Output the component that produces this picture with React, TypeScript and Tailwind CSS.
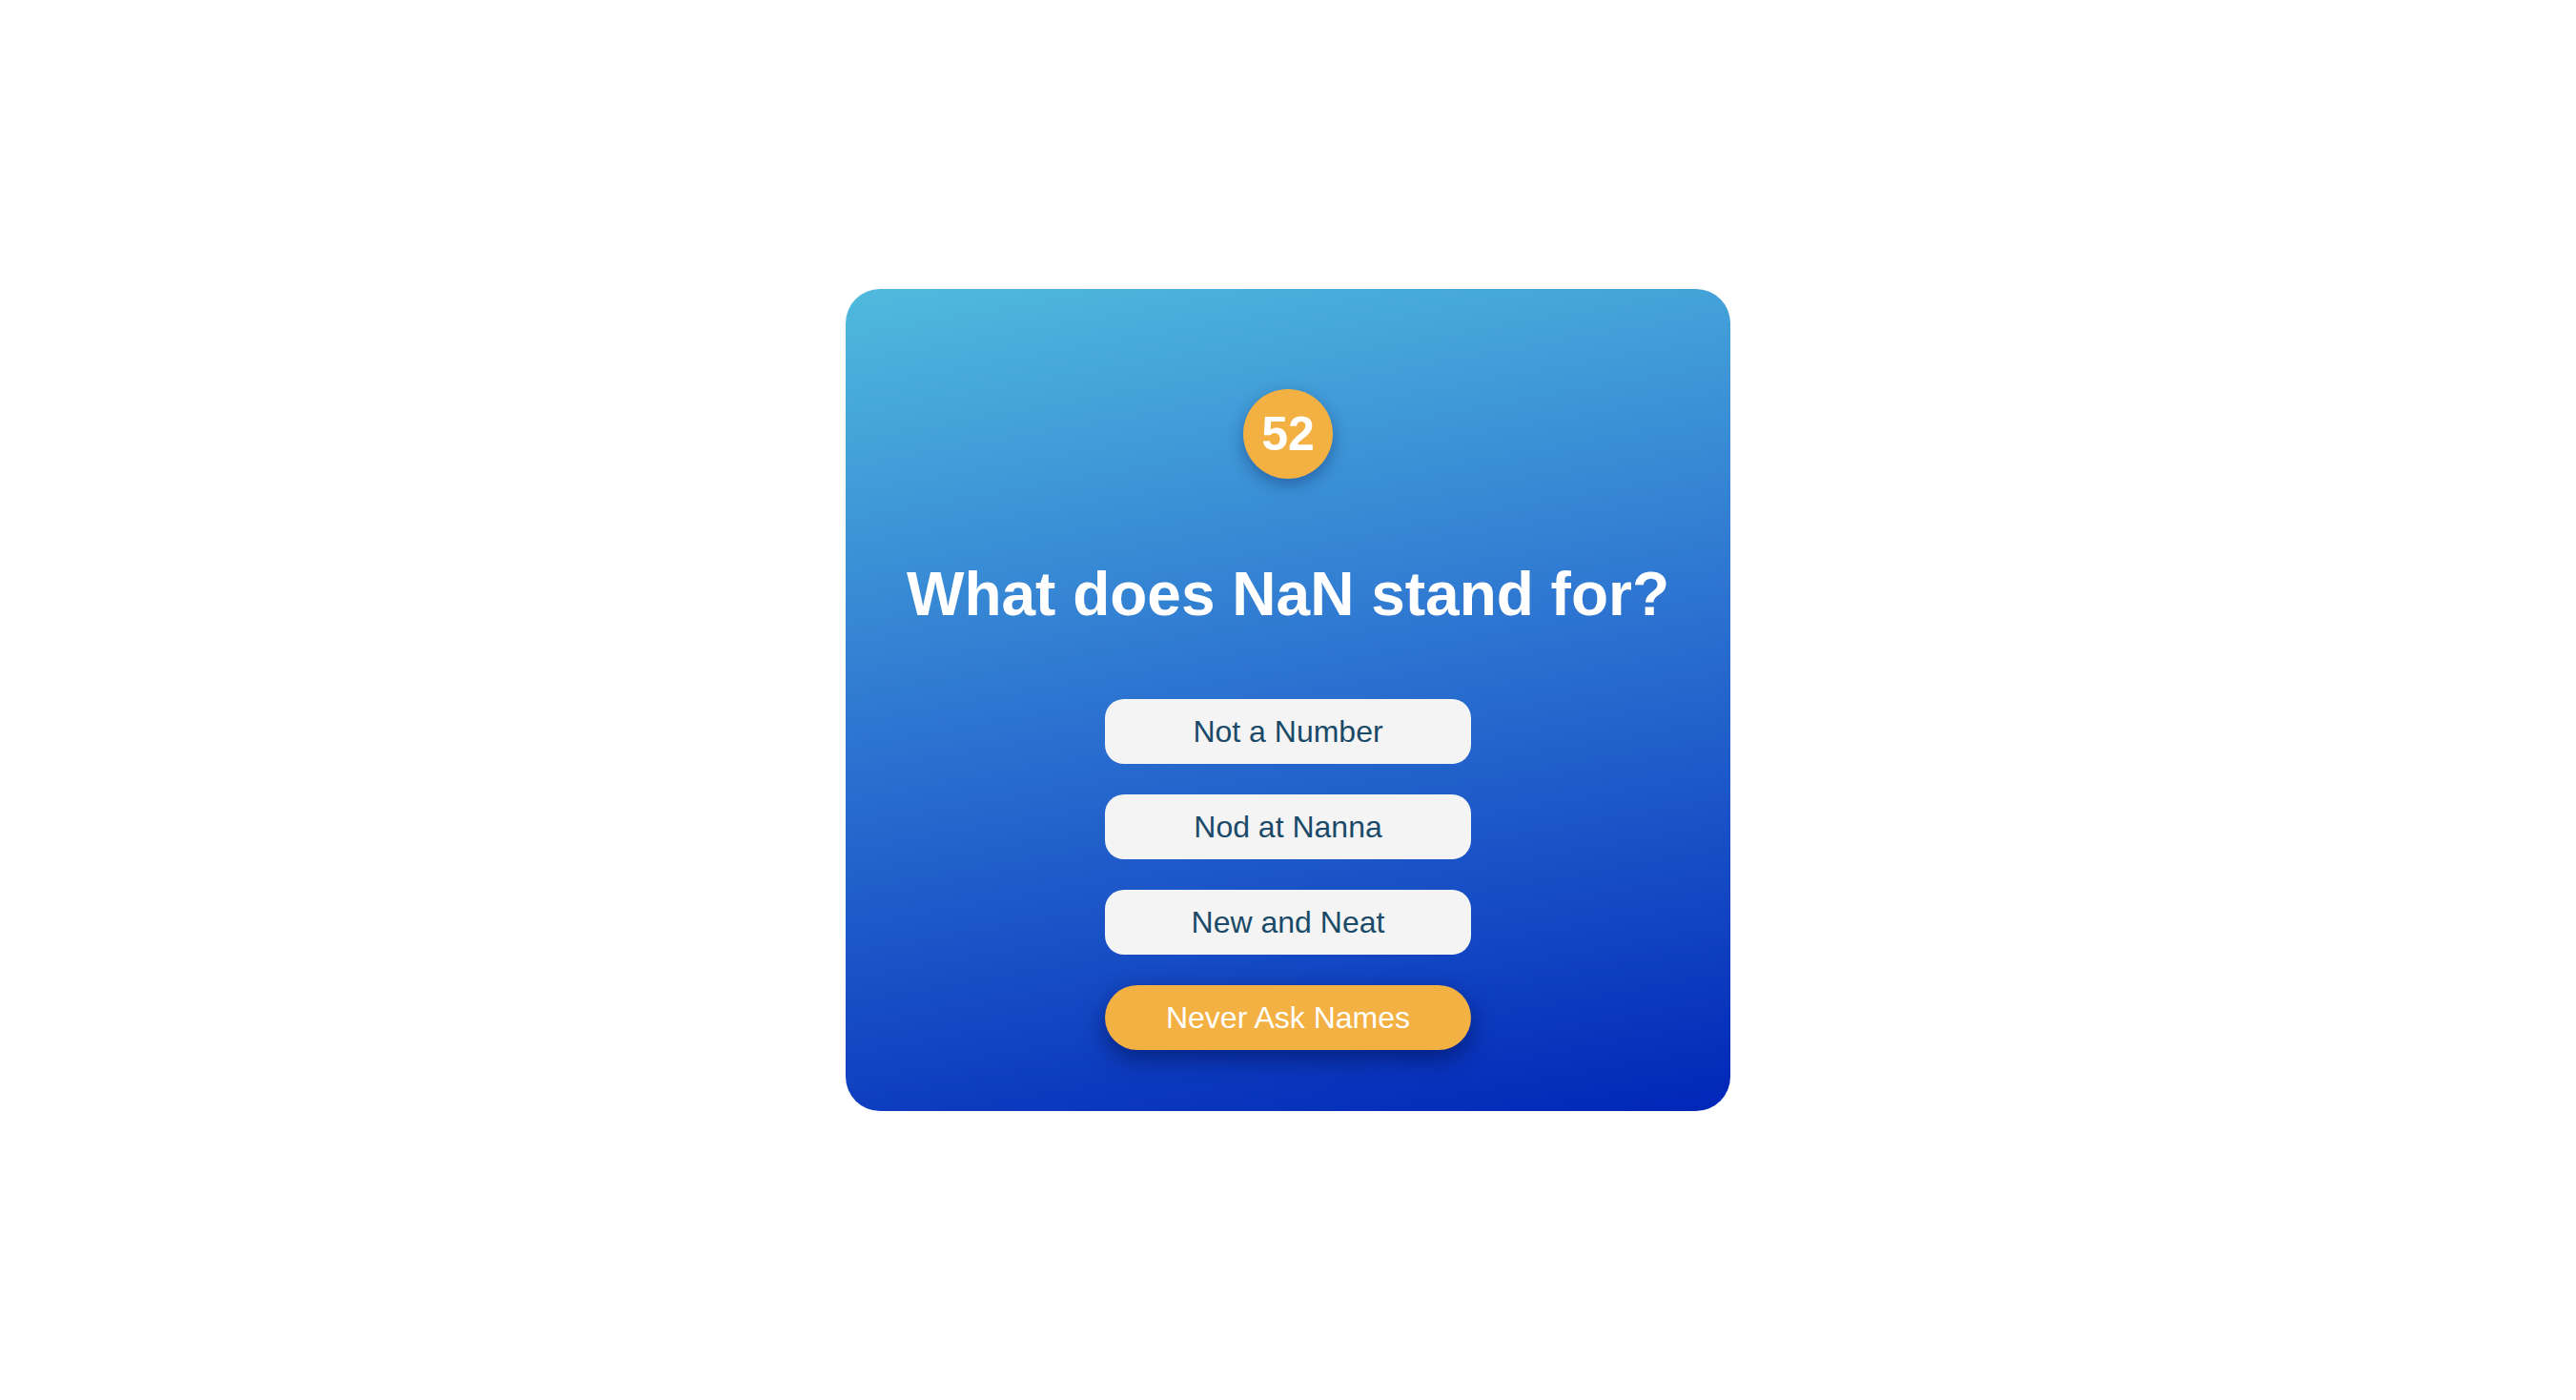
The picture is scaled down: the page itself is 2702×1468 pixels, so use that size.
const answers = [
  { text: 'Not a Number', active: false },
  { text: 'Nod at Nanna', active: false },
  { text: 'New and Neat', active: false },
  { text: 'Never Ask Names', active: true },
]

export default function App() {
  return (
    <div
      className="w-full h-screen flex items-center justify-center bg-white"
      style={{ fontFamily: '"Liberation Sans", Arial, Helvetica, sans-serif' }}
    >
      <div className="w-[928px] h-[862px] rounded-[36px] bg-[linear-gradient(170deg,#50badd_0%,#2a6fd0_50%,#0026b8_100%)] flex flex-col items-center pt-[105px]">
        {/* question number */}
        <div className="w-[94px] h-[94px] rounded-full bg-[#f3b043] flex items-center justify-center text-white font-bold text-[50px] leading-none shadow-[0_6px_16px_rgba(0,20,80,0.35)]">
          52
        </div>

        <h1 className="mt-[89px] text-white font-bold text-[64px] leading-[64px]">What does NaN stand for?</h1>

        <div className="mt-[78px] flex flex-col gap-[32px]">
          {answers.map((a) => (
            <button
              key={a.text}
              className={
                a.active
                  ? 'w-[384px] h-[68px] rounded-[34px] bg-[#f3b043] text-white text-[32px] flex items-center justify-center shadow-[0_10px_24px_rgba(0,10,70,0.5)]'
                  : 'w-[384px] h-[68px] rounded-[20px] bg-[#f4f4f4] text-[#1b4a68] text-[32px] flex items-center justify-center'
              }
            >
              {a.text}
            </button>
          ))}
        </div>
      </div>
    </div>
  )
}
